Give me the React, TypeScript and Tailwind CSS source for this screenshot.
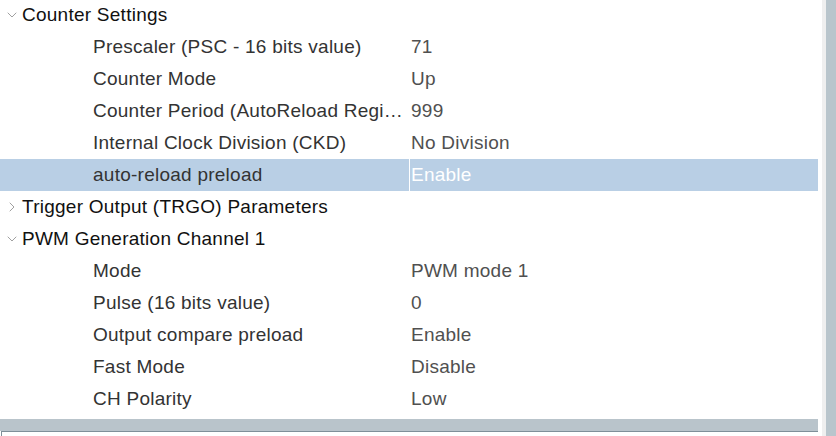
import { ChevronDown, ChevronRight } from "lucide-react"

type Row = {
  label: string
  value?: string
  group?: boolean
  open?: boolean
  selected?: boolean
}

const rows: Row[] = [
  { label: "Counter Settings", group: true, open: true },
  { label: "Prescaler (PSC - 16 bits value)", value: "71" },
  { label: "Counter Mode", value: "Up" },
  { label: "Counter Period (AutoReload Regi…", value: "999" },
  { label: "Internal Clock Division (CKD)", value: "No Division" },
  { label: "auto-reload preload", value: "Enable", selected: true },
  { label: "Trigger Output (TRGO) Parameters", group: true, open: false },
  { label: "PWM Generation Channel 1", group: true, open: true },
  { label: "Mode", value: "PWM mode 1" },
  { label: "Pulse (16 bits value)", value: "0" },
  { label: "Output compare preload", value: "Enable" },
  { label: "Fast Mode", value: "Disable" },
  { label: "CH Polarity", value: "Low" },
]

function PropRow({ row }: { row: Row }) {
  if (row.group) {
    return (
      <div className="flex h-[32px] items-center text-[#111]">
        <div className="flex w-[22px] justify-center pl-[1px]">
          {row.open ? (
            <ChevronDown className="h-[16px] w-[16px] text-[#888]" strokeWidth={1.2} />
          ) : (
            <ChevronRight className="h-[16px] w-[16px] text-[#888]" strokeWidth={1.2} />
          )}
        </div>
        <span>{row.label}</span>
      </div>
    )
  }

  return (
    <div className={`flex h-[32px] items-stretch ${row.selected ? "bg-[#b9cfe5]" : ""}`}>
      <div className="flex w-[409px] items-center pl-[93px] text-[#333] whitespace-nowrap overflow-hidden">
        {row.label}
      </div>
      <div className={`w-px ${row.selected ? "bg-white" : ""}`} />
      <div className={`flex flex-1 items-center pl-[1px] ${row.selected ? "text-white" : "text-[#505050]"}`}>
        {row.value}
      </div>
    </div>
  )
}

export default function App() {
  return (
    <div className="flex h-[436px] w-[836px] overflow-hidden bg-white text-[19px] tracking-[0.25px] font-['Liberation_Sans',Arial,sans-serif]">
      <div className="flex w-[818px] flex-col">
        <div className="-mt-px flex flex-col">
          {rows.map((row, i) => (
            <PropRow key={i} row={row} />
          ))}
        </div>
        <div className="mt-[4px] h-[12px] bg-[#b9c4cb]" />
        <div className="flex-1 border-l border-t border-[#7f8f99] ml-px" />
      </div>
      <div className="w-[4px] bg-white" />
      <div className="w-[4px] bg-[#efefef]" />
      <div className="w-[10px] bg-[#b9c5cc]" />
    </div>
  )
}
